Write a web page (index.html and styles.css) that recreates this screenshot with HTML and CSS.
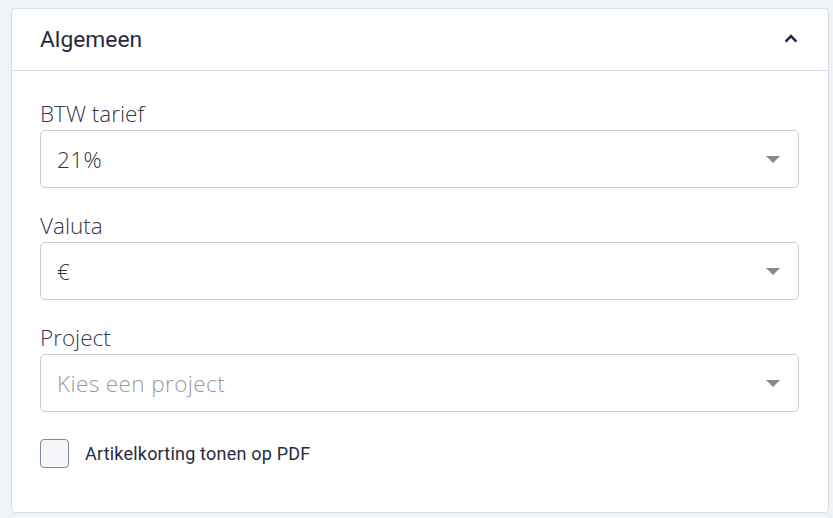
FILE: index.html
```html
<!DOCTYPE html>
<html lang="nl">
<head>
<meta charset="utf-8">
<title>Algemeen</title>
<link rel="stylesheet" href="styles.css">
</head>
<body>
<section class="card">
  <header class="card-header">
    <h2 class="card-title">Algemeen</h2>
    <svg class="chevron" width="14" height="9" viewBox="0 0 14 9"><path d="M1.6 7.6 L7 2.2 L12.4 7.6" fill="none" stroke="#232a40" stroke-width="2.6"/></svg>
  </header>
  <div class="card-body">
    <div class="group">
      <label class="label">BTW tarief</label>
      <div class="select"><span class="value">21%</span><span class="caret"></span></div>
    </div>
    <div class="group">
      <label class="label">Valuta</label>
      <div class="select"><span class="value">€</span><span class="caret"></span></div>
    </div>
    <div class="group">
      <label class="label">Project</label>
      <div class="select"><span class="value placeholder">Kies een project</span><span class="caret"></span></div>
    </div>
    <div class="check">
      <span class="box"></span>
      <span class="check-label">Artikelkorting tonen op PDF</span>
    </div>
  </div>
</section>
</body>
</html>
```
FILE: styles.css
```css
html, body {
  margin: 0;
  padding: 0;
  background: #eff3f7;
  font-family: Roboto, "Liberation Sans", sans-serif;
}
body {
  padding: 8px 4px 0 11px;
}
.card {
  background: #fff;
  border: 1px solid #d9dee6;
  border-radius: 4px;
  height: 505px;
  box-sizing: border-box;
}
.card-header {
  height: 61px;
  border-bottom: 1px solid #d9dee6;
  display: flex;
  align-items: center;
  justify-content: space-between;
  padding: 0 30px 0 28px;
}
.card-title {
  margin: 0;
  font-size: 22.8px;
  font-weight: 400;
  color: #262c40;
}
.chevron {
  display: block;
  margin-top: -2px;
}
.card-body {
  padding: 31px 29px 0 28px;
}
.group {
  margin-bottom: 26px;
}
.label {
  display: block;
  font-family: "Open Sans", Roboto, sans-serif;
  font-size: 22.5px;
  line-height: 24px;
  font-weight: 300;
  color: #353a4c;
  margin-bottom: 4px;
}
.select {
  height: 58px;
  box-sizing: border-box;
  border: 1px solid #cccccc;
  border-radius: 5px;
  display: flex;
  align-items: center;
  justify-content: space-between;
  padding: 0 18px 0 16px;
}
.value {
  font-family: "Open Sans", Roboto, sans-serif;
  font-size: 22.5px;
  font-weight: 300;
  color: #333;
  letter-spacing: 0.4px;
}
.placeholder {
  color: #9a9a9a;
}
.caret {
  width: 0;
  height: 0;
  border-left: 7px solid transparent;
  border-right: 7px solid transparent;
  border-top: 7px solid #888;
}
.check {
  display: flex;
  align-items: center;
  gap: 16px;
  margin-top: 27px;
}
.box {
  width: 29px;
  height: 29px;
  box-sizing: border-box;
  border: 1px solid #7d8aa3;
  border-radius: 4px;
  background: #f4f6fa;
}
.check-label {
  font-size: 18px;
  letter-spacing: 0.2px;
  color: #262c40;
}
```
